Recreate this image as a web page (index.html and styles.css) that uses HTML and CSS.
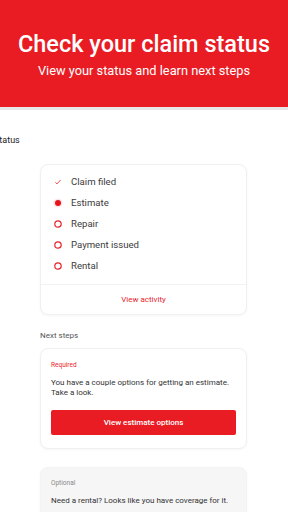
FILE: index.html
```html
<!DOCTYPE html>
<html lang="en">
<head>
<meta charset="UTF-8">
<meta name="viewport" content="width=device-width, initial-scale=1.0">
<title>Check your claim status</title>
<link rel="stylesheet" href="styles.css">
</head>
<body>

<div class="hero">
<h1>Check your claim status</h1>
<div class="hero-sub">View your status and learn next steps</div>
</div>

<div class="page">

<div class="section-title">Status</div>

<div class="main">

<div class="card">
<ul class="steps">
<li class="step done">
<svg class="icon" viewBox="0 0 10 10"><path d="M2.4 5.3 L4 6.9 L7.6 3" fill="none" stroke="#e8343c" stroke-width=".9"/></svg>
Claim filed
</li>
<li class="step current">
<svg class="icon" viewBox="0 0 10 10"><circle cx="5" cy="5" r="4.6" fill="#fde8e9"/><circle cx="5" cy="5" r="3" fill="#e8141c"/></svg>
Estimate
</li>
<li class="step">
<svg class="icon" viewBox="0 0 10 10"><circle cx="5" cy="5" r="3.2" fill="none" stroke="#e8242c" stroke-width="1.2"/></svg>
Repair
</li>
<li class="step">
<svg class="icon" viewBox="0 0 10 10"><circle cx="5" cy="5" r="3.2" fill="none" stroke="#e8242c" stroke-width="1.2"/></svg>
Payment issued
</li>
<li class="step">
<svg class="icon" viewBox="0 0 10 10"><circle cx="5" cy="5" r="3.2" fill="none" stroke="#e8242c" stroke-width="1.2"/></svg>
Rental
</li>
</ul>
<div class="card-link">View activity</div>
</div>

<div class="label">Next steps</div>

<div class="card task">
<div class="tag required">Required</div>
<p>You have a couple options for getting an estimate. Take a look.</p>
<button class="btn">View estimate options</button>
</div>

<div class="card task optional">
<div class="tag">Optional</div>
<p>Need a rental? Looks like you have coverage for it.</p>
</div>

</div>

</div>

</body>
</html>
```

FILE: styles.css
```css
*{box-sizing:border-box;}

body{
font-family:Roboto,"Liberation Sans",sans-serif;
margin:0;
background:#fff;
color:#333;
overflow:hidden;
}

.hero{
background:#e91c23;
color:#fff;
text-align:center;
height:110px;
padding-top:30px;
border-bottom:3px solid #e6e8e8;
}

.hero h1{
font-size:23.5px;
font-weight:500;
margin:0;
line-height:28px;
}

.hero-sub{
font-size:12.8px;
margin-top:5px;
}

.page{
padding-top:25px;
}

.section-title{
font-size:9px;
margin-left:-6px;
color:#222;
}

.main{
margin:19px 40px 0;
width:207px;
}

.card{
border:1px solid #f0f0f0;
border-radius:8px;
background:#fff;
box-shadow:0 1px 3px rgba(0,0,0,.04);
}

.steps{
list-style:none;
margin:0;
padding:6px 0 8px 12px;
}

.step{
display:flex;
align-items:center;
gap:8px;
height:21px;
font-size:9.6px;
color:#3c3c3c;
}

.icon{
width:10px;
height:10px;
}

.card-link{
border-top:1px solid #f2f2f2;
text-align:center;
color:#e8242c;
font-size:8px;
padding:10px 0 10px;
}

.label{
font-size:8px;
color:#555;
margin:16px 0 8px;
}

.task{
padding:12px 10px 13px;
}

.tag{
font-size:6.5px;
color:#888;
}

.tag.required{
color:#e8242c;
}

.task p{
font-size:8px;
line-height:10px;
margin:9px 0 0;
color:#333;
}

.btn{
display:block;
width:100%;
margin-top:12px;
height:25px;
border:none;
border-radius:2px;
background:#e91c23;
color:#fff;
font-family:inherit;
font-size:8px;
font-weight:500;
}

.optional{
margin-top:18px;
padding-top:11px;
background:#f6f6f6;
border-color:#f3f3f3;
}
```
